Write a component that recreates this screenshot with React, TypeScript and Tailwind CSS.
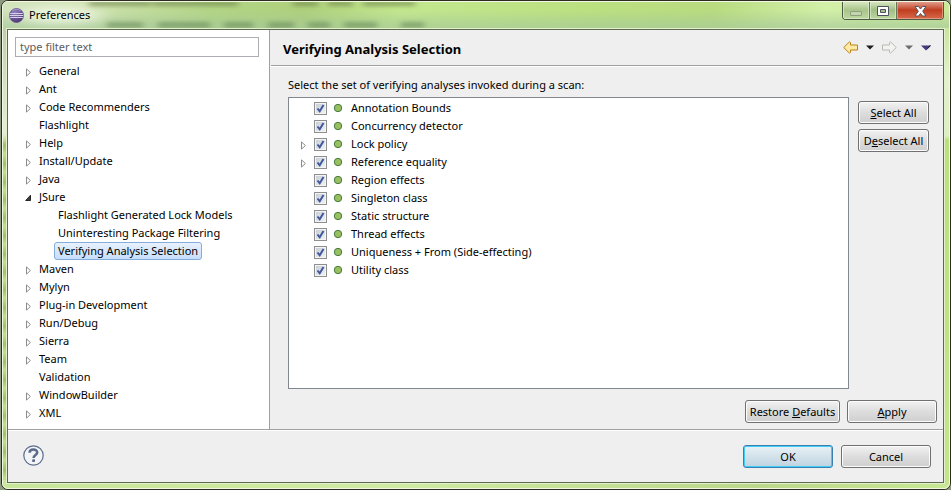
import { useState } from "react";
import type { ReactNode } from "react";

type Node = { label: string; state?: "closed" | "open"; children?: string[] };

const TREE: Node[] = [
  { label: "General", state: "closed" },
  { label: "Ant", state: "closed" },
  { label: "Code Recommenders", state: "closed" },
  { label: "Flashlight" },
  { label: "Help", state: "closed" },
  { label: "Install/Update", state: "closed" },
  { label: "Java", state: "closed" },
  {
    label: "JSure",
    state: "open",
    children: [
      "Flashlight Generated Lock Models",
      "Uninteresting Package Filtering",
      "Verifying Analysis Selection",
    ],
  },
  { label: "Maven", state: "closed" },
  { label: "Mylyn", state: "closed" },
  { label: "Plug-in Development", state: "closed" },
  { label: "Run/Debug", state: "closed" },
  { label: "Sierra", state: "closed" },
  { label: "Team", state: "closed" },
  { label: "Validation" },
  { label: "WindowBuilder", state: "closed" },
  { label: "XML", state: "closed" },
];

const ANALYSES = [
  { label: "Annotation Bounds" },
  { label: "Concurrency detector" },
  { label: "Lock policy", nested: true },
  { label: "Reference equality", nested: true },
  { label: "Region effects" },
  { label: "Singleton class" },
  { label: "Static structure" },
  { label: "Thread effects" },
  { label: "Uniqueness + From (Side-effecting)" },
  { label: "Utility class" },
];

function Twisty({ open = false, label }: { open?: boolean; label: string }) {
  return (
    <button type="button" aria-label={`Toggle ${label}`} className="flex h-[18px] w-2 items-center pt-0.5">
      {open ? (
        <svg width="7" height="8" viewBox="0 0 7 8">
          <path d="M5.5 1.2V6.5H0.7Z" fill="#404040" stroke="#262626" strokeLinejoin="round" />
        </svg>
      ) : (
        <svg width="7" height="9" viewBox="0 0 7 9">
          <path d="M1.5 0.9V8.1L5.4 4.5Z" fill="#fff" stroke="#8c8c8c" />
        </svg>
      )}
    </button>
  );
}

function PushButton({ children, primary = false, size }: { children: ReactNode; primary?: boolean; size: string }) {
  const tone = primary
    ? "border-[#3c7fb1] bg-linear-to-b from-[#e9f2f7] from-0% via-[#d3e2eb] via-50% to-[#bfd3e0] inset-ring inset-ring-[#3fcdf7]"
    : "border-[#707070] bg-linear-to-b from-[#f2f2f2] from-0% via-[#dddddd] via-50% to-[#cfcfcf] inset-ring inset-ring-[#fcfcfc]";
  return (
    <button type="button" className={`flex h-[23px] items-center justify-center rounded-[3px] border whitespace-nowrap ${tone} ${size}`}>
      <span>{children}</span>
    </button>
  );
}

function EclipseIcon() {
  return (
    <svg width="15" height="15" viewBox="0 0 15 15" className="shrink-0">
      <defs>
        <radialGradient id="orb" cx="0.4" cy="0.3" r="0.8">
          <stop offset="0" stopColor="#9484c4" />
          <stop offset="1" stopColor="#432f66" />
        </radialGradient>
      </defs>
      <circle cx="7.5" cy="7.5" r="7" fill="url(#orb)" stroke="#6a5690" strokeWidth="0.8" />
      <path d="M1.2 5.5H13.8M0.7 7.5H14.3M1.2 9.5H13.8" stroke="#d9d0ea" strokeWidth="1" />
      <path d="M3 3.2Q7.5 -0.5 12 3.2" stroke="#b7a9d8" fill="none" strokeWidth="0.8" />
    </svg>
  );
}

/* Windows showing faintly through the translucent title bar. */
function GlassShadows() {
  const lower = [[104, 36], [155, 52], [221, 29], [265, 26], [305, 22], [341, 33], [398, 23]];
  const upper = [[86, 62], [150, 85], [290, 25], [325, 25], [360, 52]];
  return (
    <svg className="absolute top-0 left-0" width="450" height="27" aria-hidden="true">
      <defs>
        <filter id="smudge" x="-10%" y="-50%" width="120%" height="200%">
          <feGaussianBlur stdDeviation="3 2" />
        </filter>
        <filter id="halo" x="-50%" y="-100%" width="200%" height="300%">
          <feGaussianBlur stdDeviation="10 5" />
        </filter>
      </defs>
      <ellipse cx="58" cy="13" rx="42" ry="9" fill="#f2f8e8" opacity="0.8" filter="url(#halo)" />
      <g filter="url(#smudge)">
        {lower.map(([x, w]) => (
          <rect key={x} x={x} y="20" width={w} height="6" fill="#5f7f50" opacity="0.55" />
        ))}
        {upper.map(([x, w]) => (
          <rect key={x} x={x} y="-1" width={w} height="5" fill="#6b7f45" opacity="0.6" />
        ))}
      </g>
    </svg>
  );
}

function TitleBar() {
  return (
    <header className="relative flex h-[26px] items-start justify-between overflow-hidden rounded-t-[5px] bg-[linear-gradient(180deg,transparent_30%,#a5c89a99_90%),linear-gradient(90deg,#d3e4bd_0%,#cfe3b0_9%,#b2d585_22%,#aed07c_32%,#c3e78e_42%,#bbe080_62%,#b8db80_75%,#d3f0a8_87%,#c9e89a_100%)]">
      <GlassShadows />
      <div className="relative flex items-center gap-[5px] pt-[5px] pl-[6px]">
        <EclipseIcon />
        <h1 className="text-[11px] leading-4">Preferences</h1>
      </div>
      <div className="relative -mt-px mr-[5px] flex h-[19px] overflow-hidden rounded-b-[4px] border border-t-0 border-[#4d5a42]">
        <button type="button" aria-label="Minimize" className="flex w-[27px] items-center justify-center border-r border-[#66755a] bg-linear-to-b from-[#dcebc6] from-0% via-[#a9c48b] via-50% to-[#bdd9a0] inset-ring inset-ring-[#e6f2d8]/60">
          <svg width="12" height="5" className="mt-1.5">
            <rect x="0.5" y="0.5" width="11" height="4" rx="0.5" fill="#c3d6ae" stroke="#8c9f7c" />
          </svg>
        </button>
        <button type="button" aria-label="Maximize" className="flex w-[27px] items-center justify-center border-r border-[#66755a] bg-linear-to-b from-[#dcebc6] from-0% via-[#a0bd84] via-50% to-[#bdd9a0] inset-ring inset-ring-[#e6f2d8]/60">
          <svg width="12" height="10" className="mt-0.5">
            <path d="M0.5 0.5H11.5V9.5H0.5ZM3.5 3.5V6.5H8.500V3.500Z" fill="#fff" fillRule="evenodd" stroke="#4e5260" />
          </svg>
        </button>
        <button type="button" aria-label="Close" className="flex w-[46px] items-center justify-center bg-linear-to-b from-[#e3a696] from-0% via-[#bf3d1e] via-50% to-[#d9684a] inset-ring inset-ring-[#f0b8a4]/60">
          <svg width="13" height="11" viewBox="0 0 13 11" className="mt-0.5">
            <path d="M1 0.500H4.500L6.500 3L8.500 0.500H12L8.700 5.200L12 10H8.500L6.500 7.500L4.500 10H1L4.300 5.200Z" fill="#fff" stroke="#54545f" strokeLinejoin="round" />
          </svg>
        </button>
      </div>
    </header>
  );
}

function NavArrow({ forward = false }: { forward?: boolean }) {
  return (
    <button type="button" aria-label={forward ? "Forward" : "Back"}>
      <svg width="15" height="13" viewBox="0 0 15 13">
        {forward ? (
          <path d="M0.500 4H7.500V1.500L8.500 0.800L14.300 6.500L8.500 12.200L7.500 11.500V9H0.500Z" fill="#f2f2ee" stroke="#b9b9b3" />
        ) : (
          <path d="M14.500 4H7.500V1.500L6.500 0.800L0.700 6.500L6.500 12.200L7.500 11.500V9H14.500Z" fill="#fdeaa4" stroke="#bd8118" />
        )}
      </svg>
    </button>
  );
}

function Caret({ label, color, big = false }: { label: string; color: string; big?: boolean }) {
  return (
    <button type="button" aria-label={label}>
      {big ? (
        <svg width="10" height="6" viewBox="0 0 10 6">
          <path d="M0 0.500H10L5 5.500Z" fill={color} />
          <path d="M5.500 5L10 0.500H8.500Z" fill="#111" />
        </svg>
      ) : (
        <svg width="8" height="5" viewBox="0 0 8 5">
          <path d="M0 0.500H8L4 4.500Z" fill={color} />
        </svg>
      )}
    </button>
  );
}

function Sidebar() {
  const [selected, setSelected] = useState("Verifying Analysis Selection");
  return (
    <nav aria-label="Preference pages" className="w-[262px] shrink-0 border-r border-[#a0a0a0] bg-white pt-[7px] pr-[10px] pb-[7px] pl-[7px]">
      <input
        type="text"
        aria-label="Filter"
        placeholder="type filter text"
        className="block h-5 w-full border border-[#abadb3] px-1 pb-0.5 text-[11px] leading-4 outline-none placeholder:text-[#5c5c5c]"
      />
      <ul className="mt-[5px]">
        {TREE.map((node) => (
          <li key={node.label}>
            <div className="flex h-[18px] items-center gap-[5px] pl-[10px]">
              <span className="flex w-2">
                {node.state && <Twisty open={node.state === "open"} label={node.label} />}
              </span>
              <button type="button" className="px-px leading-4 whitespace-nowrap" onClick={() => setSelected(node.label)}>
                {node.label}
              </button>
            </div>
            {node.children && (
              <ul>
                {node.children.map((child) => (
                  <li key={child} className="flex h-[18px] pl-[39px]">
                    <button
                      type="button"
                      onClick={() => setSelected(child)}
                      className={`rounded-[3px] border px-[3px] leading-4 whitespace-nowrap ${
                        child === selected
                          ? "border-[#84acdd] bg-linear-to-b from-[#e8f1fd] to-[#c6defc]"
                          : "border-transparent"
                      }`}
                    >
                      {child}
                    </button>
                  </li>
                ))}
              </ul>
            )}
          </li>
        ))}
      </ul>
    </nav>
  );
}

function AnalysisRow({ label, nested }: { label: string; nested?: boolean }) {
  return (
    <li className="flex h-[18px] items-center pl-[11px]">
      <span className="flex w-[14px]">{nested && <Twisty label={label} />}</span>
      <label className="flex items-center">
        <span className="grid size-[13px]">
          <input
            type="checkbox"
            defaultChecked
            className="peer col-start-1 row-start-1 size-[13px] appearance-none border border-[#8e8f8f] bg-linear-to-br from-[#c5cad3] to-[#f4f5f6] inset-ring inset-ring-[#f4f4f4]"
          />
          <svg width="13" height="13" className="pointer-events-none invisible col-start-1 row-start-1 peer-checked:visible">
            <path d="M3.5 6.5L5.7 9.3L9.5 3" fill="none" stroke="#40589c" strokeWidth="2" />
          </svg>
        </span>
        <svg width="10" height="10" className="mr-2 ml-[6px]">
          <circle cx="5" cy="5" r="3.7" fill="#98c060" stroke="#47793f" />
        </svg>
        <span className="leading-4 whitespace-nowrap">{label}</span>
      </label>
    </li>
  );
}

export default function App() {
  return (
    <div className="flex min-h-screen flex-col bg-[#8e9a80] pl-px font-['Noto_Sans','Open_Sans',sans-serif] text-[11px] leading-4 text-black">
      <div className="flex flex-1 flex-col rounded-[7px] border border-[#2b2b20] bg-[#c8e69a]">
        <div className="flex flex-1 flex-col rounded-[6px] border border-[#f2f8e4] bg-[linear-gradient(90deg,#c8e69a,#d0eca4_40%,#bcd88c_80%,#c8e894)]">
          <TitleBar />
          <div className="flex flex-1 flex-col bg-[linear-gradient(180deg,#c0cdb0_0px,#d8e2cc_60px,#e6ecd8_105px,transparent_115px),repeating-linear-gradient(180deg,#c3e088_0px,#a3bd70_10px,#c3e088_18px)] bg-[length:8px_calc(100%_-_8px)] bg-no-repeat">
            <div className="flex flex-1 flex-col bg-[linear-gradient(180deg,#c8e69a_0px,#e2f2cc_50px,#dceec2_108px,#bce07c_112px,#c4e48c_100%)] bg-[length:6px_calc(100%_-_4px)] bg-right-top bg-no-repeat pr-1 pb-1 pl-[3px]">
              <div className="flex flex-1 flex-col border border-[#e4efce]">
                <div className="flex flex-1 flex-col border border-[#5c6a50] bg-[#efefef]">
                  <div className="flex flex-1">
                    <Sidebar />
                    <main className="flex min-w-0 flex-1 flex-col">
                      <div className="ml-px flex h-9 items-center justify-between border-b border-[#a0a0a0] pr-3 pl-3">
                        <h2 className="pt-0.5 text-[13px] leading-5 font-bold whitespace-nowrap">Verifying Analysis Selection</h2>
                        <div className="flex items-center gap-2">
                          <NavArrow />
                          <Caret label="Back history" color="#1d1d1d" />
                          <NavArrow forward />
                          <Caret label="Forward history" color="#6d6d6d" />
                          <Caret label="View menu" color="#453a80" big />
                        </div>
                      </div>
                      <section className="flex flex-1 flex-col border-t border-white pt-[10px] pb-[6px] pl-[18px]">
                        <p id="analyses-label">Select the set of verifying analyses invoked during a scan:</p>
                        <div className="mt-1 flex flex-1 gap-[9px] pr-[14px]">
                          <ul aria-labelledby="analyses-label" className="flex-1 border border-[#828790] bg-white pt-px">
                            {ANALYSES.map((a) => (
                              <AnalysisRow key={a.label} label={a.label} nested={a.nested} />
                            ))}
                          </ul>
                          <div className="flex flex-col gap-[5px] pt-1">
                            <PushButton size="w-[71px]"><u>S</u>elect All</PushButton>
                            <PushButton size="w-[71px]">D<u>e</u>select All</PushButton>
                          </div>
                        </div>
                        <div className="mt-[11px] flex justify-end gap-[7px] pr-[6px]">
                          <PushButton size="w-[95px]">Restore <u>D</u>efaults</PushButton>
                          <PushButton size="w-[90px]"><u>A</u>pply</PushButton>
                        </div>
                      </section>
                    </main>
                  </div>
                  <footer className="border-t border-[#a0a0a0]">
                    <div className="flex items-start justify-between border-t border-white pt-[14px] pr-3 pb-[14px] pl-[15px]">
                      <button type="button" aria-label="Help">
                        <svg width="21" height="21" viewBox="0 0 21 21">
                          <circle cx="10.5" cy="10.5" r="9.7" fill="#f3f4f6" stroke="#5b6b8c" strokeWidth="1.2" />
                          <path d="M6.600 7.800C6.600 3.500 14.200 3.500 14.200 7.500C14.200 10 10.600 10 10.600 13" fill="none" stroke="#5b6b8c" strokeWidth="2.600" />
                          <rect x="9.200" y="14.200" width="2.800" height="2.700" rx="0.600" fill="#5b6b8c" />
                        </svg>
                      </button>
                      <div className="flex gap-2">
                        <PushButton primary size="w-[90px]">OK</PushButton>
                        <PushButton size="w-[90px]">Cancel</PushButton>
                      </div>
                    </div>
                  </footer>
                </div>
              </div>
            </div>
          </div>
        </div>
      </div>
    </div>
  );
}
